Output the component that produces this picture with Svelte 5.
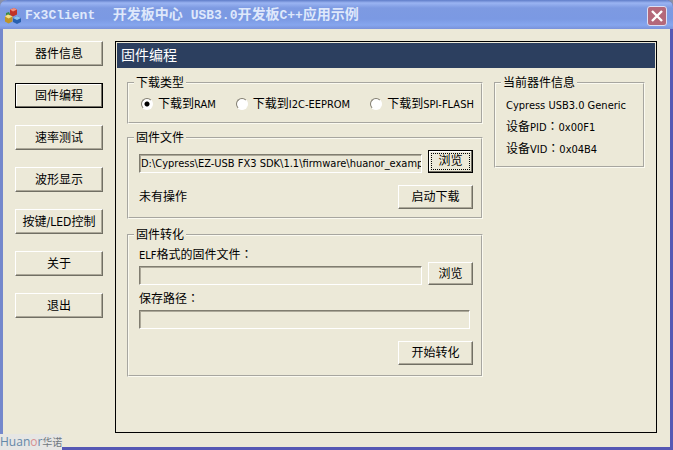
<script>
    const menu = ['器件信息', '固件编程', '速率测试', '波形显示', '按键/LED控制', '关于', '退出'];
    const targets = ['RAM', 'I2C-EEPROM', 'SPI-FLASH'];

    let page = $state('固件编程');
    let target = $state('RAM');
    let firmware = $state('D:\\Cypress\\EZ-USB FX3 SDK\\1.1\\firmware\\huanor_examp');
    let elfFile = $state('');
    let savePath = $state('');
</script>

<div class="window">
    <header class="titlebar">
        <svg class="app-icon" viewBox="0 0 16 16" aria-hidden="true">
            <path d="M5 1.500 9 0l3 1.500v5L8 8.500 5 7z" fill="#c03428" />
            <path d="M5 1.500 9 0l3 1.500-4 2z" fill="#f09080" />
            <path d="M1 5l3-1 1.500 3-2.500 1-2-1z" fill="#3c8a48" />
            <path d="M0 8.500l3-2 4.500 2v5l-4 2-3.500-2z" fill="#c09428" />
            <path d="M0 8.500l3-2 4.500 2-4 2z" fill="#f4e088" />
            <path d="M8 10l4-2 4 2v4l-4 2-4-2z" fill="#2860b0" />
            <path d="M8 10l4-2 4 2-4 2z" fill="#8cc4ee" />
        </svg>
        <h1>Fx3Client&nbsp; <span class="app">开发板中心</span> USB3.0<span>开发板</span>C++<span>应用示例</span></h1>
        <button class="close" aria-label="关闭">
            <svg viewBox="0 0 18 18" aria-hidden="true">
                <path d="M4 4l10 10M14 4L4 14" stroke="#fff" stroke-width="2.400" />
            </svg>
        </button>
    </header>

    <div class="body">
        <nav>
            {#each menu as item}
                <button class="btn" class:active={page === item} onclick={() => (page = item)}>{item}</button>
            {/each}
        </nav>

        <main>
            <h2>固件编程</h2>
            <div class="content">
                <div class="groups">
                    <fieldset class="types">
                        <legend>下载类型</legend>
                        <div class="radios">
                            {#each targets as t}
                                <label>
                                    <input type="radio" name="target" value={t} bind:group={target} />
                                    <span>下载到<span class="latin">{t}</span></span>
                                </label>
                            {/each}
                        </div>
                    </fieldset>

                    <fieldset class="firmware">
                        <legend>固件文件</legend>
                        <div class="row">
                            <input class="field" type="text" aria-label="固件文件" readonly bind:value={firmware} />
                            <button class="btn browse active focused"><span>浏览</span></button>
                        </div>
                        <div class="row status">
                            <p>未有操作</p>
                            <button class="btn action">启动下载</button>
                        </div>
                    </fieldset>

                    <fieldset class="convert">
                        <legend>固件转化</legend>
                        <div class="row">
                            <div class="labelled">
                                <label for="elf"><span class="latin">ELF</span>格式的固件文件<span class="colon">：</span></label>
                                <input class="field" id="elf" type="text" readonly bind:value={elfFile} />
                            </div>
                            <button class="btn browse">浏览</button>
                        </div>
                        <div class="labelled save">
                            <label for="save">保存路径<span class="colon">：</span></label>
                            <input class="field" id="save" type="text" readonly bind:value={savePath} />
                        </div>
                        <div class="row end">
                            <button class="btn action">开始转化</button>
                        </div>
                    </fieldset>
                </div>

                <fieldset class="device">
                    <legend>当前器件信息</legend>
                    <p><span class="latin">Cypress USB3.0 Generic</span></p>
                    <p>设备<span class="latin">PID</span><span class="colon">：</span><span class="latin">0x00F1</span></p>
                    <p>设备<span class="latin">VID</span><span class="colon">：</span><span class="latin">0x04B4</span></p>
                </fieldset>
            </div>
        </main>
    </div>

    <div class="logo">Huan<em>o</em>r<span>华诺</span></div>
</div>

<style>
    :global(body) {
        background: #8a90a8;
    }

    .window {
        position: relative;
        box-sizing: border-box;
        min-height: 100vh;
        display: flex;
        flex-direction: column;
        border: 3px solid #5658b4;
        border-top: 0;
        border-left-color: #7488cc;
        border-radius: 7px 7px 0 0;
        background: #ece9d8;
        font: 12px/16px 'DejaVu Sans Condensed', 'Noto Sans CJK SC', sans-serif;
        color: #000;
    }

    h1, h2, p {
        margin: 0;
    }

    button, input {
        box-sizing: border-box;
        margin: 0;
        padding: 0;
        font: inherit;
        color: inherit;
    }

    .titlebar {
        display: flex;
        align-items: center;
        height: 29px;
        margin: 0 -3px;
        padding: 2px 6px 0 5px;
        box-sizing: border-box;
        border-radius: 7px 7px 0 0;
        background: linear-gradient(#5f7cc8, #9ab4f2 3px, #7d9ae2 8px, #7b99e3 19px, #86a6ee 25px, #7a92da);
    }

    .app-icon {
        width: 16px;
        height: 16px;
    }

    h1 {
        flex: 1;
        margin-left: 4px;
        font: bold 13px/18px 'Liberation Mono', 'Noto Sans CJK SC', monospace;
        color: #dfe8fb;
        white-space: nowrap;
    }

    h1 span {
        font-size: 14px;
    }

    h1 .app {
        margin-left: 2px;
    }

    .close {
        width: 20px;
        height: 20px;
        border: 1px solid #dcdff4;
        border-radius: 3px;
        background: #b4687a;
    }

    .close svg {
        display: block;
        width: 18px;
        height: 18px;
    }

    .body {
        flex: 1;
        display: flex;
        gap: 12px;
        padding: 12px 13px 14px 12px;
    }

    nav {
        flex: none;
        display: flex;
        flex-direction: column;
        gap: 17px;
        width: 88px;
    }

    .btn {
        flex: none;
        height: 25px;
        border: 1px solid;
        border-color: #fff #716f64 #716f64 #fff;
        background: #ece9d8;
        box-shadow: inset -1px -1px #aca899;
        white-space: nowrap;
    }

    .btn.active {
        border-color: #000;
        box-shadow: inset -1px -1px #716f64, inset 1px 1px #fff;
    }

    main {
        flex: 1;
        min-width: 0;
        border: 1px solid #000;
    }

    h2 {
        margin: 1px 1px 0;
        padding: 0 4px;
        background: #2c3f5f;
        font-size: 14px;
        font-weight: normal;
        line-height: 25px;
        color: #fff;
    }

    .content {
        display: grid;
        grid-template-columns: minmax(0, 1fr) 151px;
        align-items: start;
        gap: 11px;
        padding: 7px 11px;
    }

    fieldset {
        margin: 0;
        min-width: 0;
        padding: 0 8px 8px 10px;
        border: 2px groove #fbfaf0;
    }

    legend {
        margin-left: -5px;
        padding: 0 2px;
    }

    .radios {
        display: flex;
        gap: 20px;
        padding: 5px 0 2px 2px;
    }

    .radios label {
        display: flex;
        align-items: center;
        gap: 5px;
        white-space: nowrap;
    }

    input[type='radio'] {
        appearance: none;
        width: 12px;
        height: 12px;
        border: 1px solid;
        border-color: #807d70 #fff #fff #807d70;
        border-radius: 50%;
        background: #fff;
    }

    input[type='radio']:checked {
        background: radial-gradient(circle, #000 2px, #fff 3px);
    }

    /* Latin runs are set a size below the Chinese text */
    .latin {
        font-size: 11px;
        line-height: 0;
    }

    .colon {
        font-family: 'Noto Sans CJK TC', sans-serif;
        line-height: 0;
    }

    .firmware {
        margin-top: 6px;
    }

    .convert {
        margin-top: 8px;
        padding-bottom: 10px;
    }

    .row {
        display: flex;
        align-items: flex-end;
        gap: 6px;
    }

    .firmware .row:first-of-type {
        padding-top: 4px;
    }

    .firmware .status {
        align-items: center;
        justify-content: space-between;
        margin-top: 12px;
    }

    .field {
        flex: 1;
        min-width: 0;
        height: 19px;
        padding: 0 0 0 1px;
        border: 1px solid;
        border-color: #807d70 #fff #fff #807d70;
        border-radius: 0;
        background: #ece9d8;
        box-shadow: inset 1px 1px #aca899;
        font-size: 11px;
        outline: none;
    }

    .browse {
        width: 45px;
        height: 23px;
    }

    .focused {
        padding: 2px;
    }

    .focused span {
        display: block;
        border: 1px dotted #000;
        line-height: 15px;
    }

    .action {
        width: 75px;
        height: 24px;
    }

    .labelled {
        flex: 1;
        display: flex;
        flex-direction: column;
        gap: 3px;
    }

    .labelled .field {
        flex: none;
    }

    .convert .row:first-of-type {
        padding-top: 4px;
    }

    .save {
        margin: 6px 3px 0 0;
    }

    .end {
        justify-content: flex-end;
        margin-top: 12px;
    }

    .device {
        padding-top: 3px;
        padding-bottom: 6px;
    }

    .device p {
        line-height: 22px;
        white-space: nowrap;
    }

    .logo {
        position: absolute;
        left: -3px;
        bottom: -3px;
        background: #e6e6e4;
        font: 12px/16px 'Open Sans', 'Noto Sans CJK SC', sans-serif;
        color: #6488a8;
    }

    .logo em {
        font-style: normal;
        color: #d89090;
    }

    .logo span {
        font-size: 10px;
        color: #707880;
    }
</style>
